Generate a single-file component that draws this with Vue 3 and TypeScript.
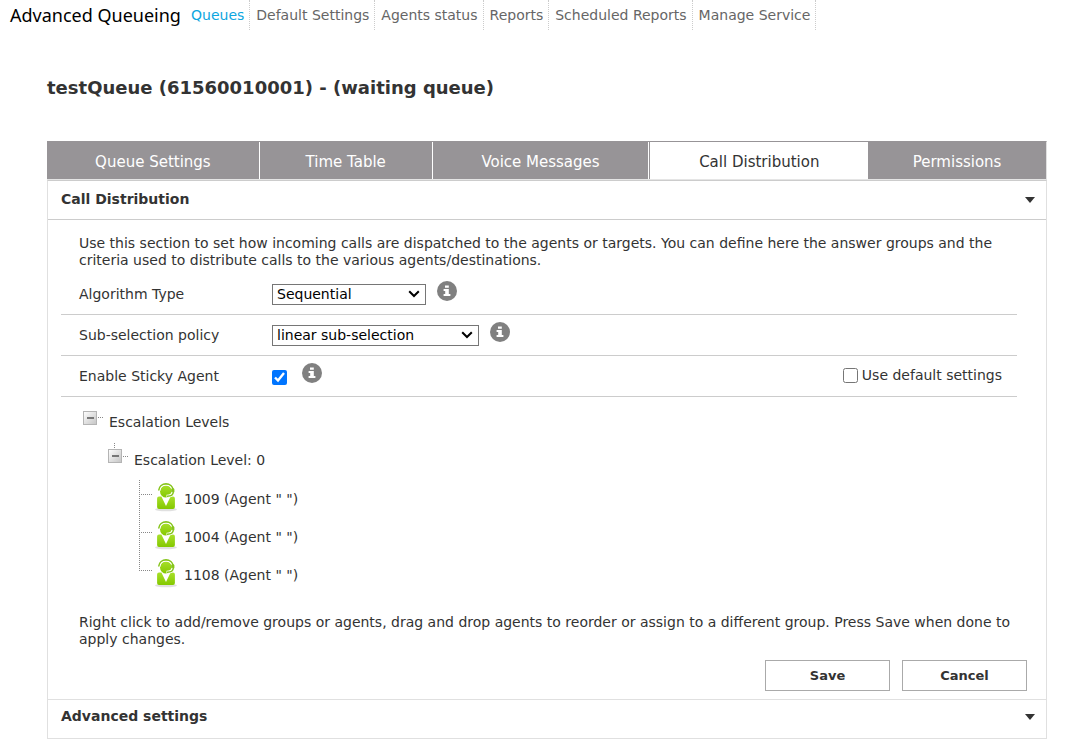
<script setup lang="ts">
import { ref } from 'vue'

interface Agent {
  ext: string
  name: string
}

const navItems: string[] = [
  'Queues',
  'Default Settings',
  'Agents status',
  'Reports',
  'Scheduled Reports',
  'Manage Service',
]
const tabs: string[] = [
  'Queue Settings',
  'Time Table',
  'Voice Messages',
  'Call Distribution',
  'Permissions',
]
const agents: Agent[] = [
  { ext: '1009', name: ' ' },
  { ext: '1004', name: ' ' },
  { ext: '1108', name: ' ' },
]

const activeNav = ref('Queues')
const activeTab = ref('Call Distribution')
const algorithm = ref('Sequential')
const policy = ref('linear sub-selection')
const sticky = ref(true)
const useDefaults = ref(false)
</script>

<template>
  <div class="page">
    <header class="topbar">
      <span class="brand">Advanced Queueing</span>
      <nav class="nav">
        <a
          v-for="item in navItems"
          :key="item"
          href="#"
          class="nav-link"
          :class="{ current: item === activeNav }"
          @click.prevent="activeNav = item"
          >{{ item }}</a
        >
      </nav>
    </header>

    <main class="main">
      <h1 class="title">testQueue (61560010001) - (waiting queue)</h1>

      <div class="tabs" role="tablist">
        <button
          v-for="tab in tabs"
          :key="tab"
          type="button"
          role="tab"
          class="tab"
          :class="{ active: tab === activeTab }"
          :aria-selected="tab === activeTab"
          @click="activeTab = tab"
        >
          {{ tab }}
        </button>
      </div>

      <div class="panel">
        <button type="button" class="section-head divided">
          <span>Call Distribution</span>
          <svg class="caret" width="10" height="6" viewBox="0 0 10 6" aria-hidden="true">
            <path d="M0 0h10L5 6z" fill="#333" />
          </svg>
        </button>

        <div class="section-body">
          <p class="text">
            Use this section to set how incoming calls are dispatched to the agents or targets. You can define here the answer groups and the criteria used to distribute calls to the various agents/destinations.
          </p>

          <div class="row">
            <label class="row-label" for="algorithm">Algorithm Type</label>
            <span class="select-box narrow">
              <select id="algorithm" v-model="algorithm">
                <option>Sequential</option>
                <option>Circular</option>
              </select>
              <svg class="chevron" width="12" height="8" viewBox="0 0 12 8" aria-hidden="true">
                <path d="M1.2 1.2L6 6l4.800-4.800" />
              </svg>
            </span>
            <svg class="info" width="20" height="20" viewBox="0 0 20 20" aria-hidden="true">
              <circle cx="10" cy="10" r="10" />
              <path d="M8 4.600h3.800v2.200H8zM6.600 8h5.200v5h1.600v2H6.600v-2h1.600V9.900H6.600z" />
            </svg>
          </div>

          <div class="row">
            <label class="row-label" for="policy">Sub-selection policy</label>
            <span class="select-box wide">
              <select id="policy" v-model="policy">
                <option>linear sub-selection</option>
                <option>random sub-selection</option>
              </select>
              <svg class="chevron" width="12" height="8" viewBox="0 0 12 8" aria-hidden="true">
                <path d="M1.2 1.2L6 6l4.800-4.800" />
              </svg>
            </span>
            <svg class="info" width="20" height="20" viewBox="0 0 20 20" aria-hidden="true">
              <circle cx="10" cy="10" r="10" />
              <path d="M8 4.600h3.800v2.200H8zM6.600 8h5.200v5h1.600v2H6.600v-2h1.600V9.900H6.600z" />
            </svg>
          </div>

          <div class="row">
            <label class="row-label" for="sticky">Enable Sticky Agent</label>
            <input id="sticky" v-model="sticky" type="checkbox" class="check" />
            <svg class="info" width="20" height="20" viewBox="0 0 20 20" aria-hidden="true">
              <circle cx="10" cy="10" r="10" />
              <path d="M8 4.600h3.800v2.200H8zM6.600 8h5.200v5h1.600v2H6.600v-2h1.600V9.900H6.600z" />
            </svg>
            <span class="defaults">
              <input id="defaults" v-model="useDefaults" type="checkbox" class="check" />
              <label for="defaults">Use default settings</label>
            </span>
          </div>

          <svg class="defs" width="0" height="0" aria-hidden="true">
            <defs>
              <linearGradient id="boxFill" x1="0" y1="0" x2="1" y2="1">
                <stop offset="0" stop-color="#fff" />
                <stop offset="1" stop-color="#c4c4c4" />
              </linearGradient>
              <linearGradient id="agentFill" x1="0" y1="0" x2="0" y2="1">
                <stop offset="0" stop-color="#a8e02a" />
                <stop offset="1" stop-color="#84c800" />
              </linearGradient>
            </defs>
          </svg>

          <ul class="tree">
            <li>
              <div class="node">
                <svg width="26" height="38" viewBox="0 0 26 38" aria-hidden="true">
                  <rect x="0.5" y="8.500" width="13" height="13" fill="url(#boxFill)" stroke="#b4b4b4" />
                  <path d="M4 15h7" stroke="#777" stroke-width="2" />
                  <path d="M15 14.500h5" class="dots" />
                </svg>
                <span>Escalation Levels</span>
              </div>
              <ul class="level">
                <li>
                  <div class="node">
                    <svg width="26" height="38" viewBox="0 0 26 38" aria-hidden="true">
                      <path d="M6.500 2v6" class="dots" />
                      <rect x="0.5" y="8.500" width="13" height="13" fill="url(#boxFill)" stroke="#b4b4b4" />
                      <path d="M4 15h7" stroke="#777" stroke-width="2" />
                      <path d="M15 15.500h5" class="dots" />
                    </svg>
                    <span>Escalation Level: 0</span>
                  </div>
                  <ul class="agents">
                    <li v-for="(agent, i) in agents" :key="agent.ext" class="node">
                      <svg width="46" height="38" viewBox="0 0 46 38" aria-hidden="true">
                        <path :d="i === agents.length - 1 ? 'M1.500 0v15' : 'M1.500 0v38'" class="dots" />
                        <path d="M3 14.500h11" class="dots" />
                        <ellipse cx="28" cy="29.500" rx="11" ry="1.800" fill="#000" opacity="0.12" />
                        <path
                          d="M21 16.500h2.400l4.600 9.500 4.600-9.500h2.400a1.900 1.900 0 0 1 1.900 1.900v8.600a1.900 1.900 0 0 1-1.900 1.900h-14a1.900 1.900 0 0 1-1.900-1.900v-8.600a1.900 1.900 0 0 1 1.900-1.900z"
                          fill="url(#agentFill)"
                        />
                        <ellipse cx="28" cy="11.300" rx="6" ry="6.300" fill="url(#agentFill)" />
                        <path d="M21.200 10.500c.8-8 12.800-8 13.600 0" fill="none" stroke="#fff" stroke-width="2.600" />
                        <path d="M20.700 10.500c.6-8.800 14-8.800 14.600 0" fill="none" stroke="#86c51c" stroke-width="1.600" />
                        <rect x="33.200" y="8" width="3.200" height="5" rx="1.500" fill="#86c51c" />
                        <path d="M35 12c-.3 3-2.800 4.200-6.500 4.200" fill="none" stroke="#fff" stroke-width="3" />
                        <path d="M35.300 12c-.2 3-2.600 4.300-6.300 4.200" fill="none" stroke="#86c51c" stroke-width="1.500" />
                      </svg>
                      <span>{{ agent.ext }} (Agent "{{ agent.name }}")</span>
                    </li>
                  </ul>
                </li>
              </ul>
            </li>
          </ul>

          <p class="text hint">
            Right click to add/remove groups or agents, drag and drop agents to reorder or assign to a different group. Press Save when done to apply changes.
          </p>

          <div class="actions">
            <button type="button" class="btn">Save</button>
            <button type="button" class="btn">Cancel</button>
          </div>
        </div>

        <button type="button" class="section-head">
          <span>Advanced settings</span>
          <svg class="caret" width="10" height="6" viewBox="0 0 10 6" aria-hidden="true">
            <path d="M0 0h10L5 6z" fill="#333" />
          </svg>
        </button>
      </div>
    </main>
  </div>
</template>

<style>
body {
  margin: 0;
  background: #fff;
}
</style>

<style scoped>
.page {
  font-family: Verdana, 'DejaVu Sans', sans-serif;
  font-size: 14px;
  line-height: 17px;
  color: #333;
}
.page button,
.page select {
  font-family: inherit;
}
.topbar {
  display: flex;
  height: 30px;
  padding-left: 10px;
}
.brand {
  min-width: 175px;
  font-family: 'Noto Sans', sans-serif;
  font-size: 18px;
  line-height: 30px;
  color: #000;
  white-space: nowrap;
}
.nav {
  display: flex;
}
.nav-link {
  padding: 0 5px 0 6px;
  border-right: 1px dotted #ccc;
  line-height: 30px;
  color: #666;
  text-decoration: none;
  white-space: nowrap;
}
.nav-link.current {
  color: #0da6e0;
}
.main {
  padding: 47px 31px 16px 47px;
}
.title {
  margin: 0;
  font-size: 18px;
  line-height: 22px;
  font-weight: bold;
  color: #333;
}
.tabs {
  display: grid;
  grid-template-columns: 213fr 173fr 217fr 219fr 178fr;
  margin-top: 42px;
  border-top: 1px solid #979497;
  border-right: 1px solid #e0e0e0;
  border-bottom: 1px solid #e5e5e5;
  background: #979497;
}
.tab {
  height: 37px;
  padding: 2px 0 0;
  border: 0;
  border-right: 1px solid #fff;
  background: #979497;
  color: #fff;
  font-size: 15px;
  line-height: 20px;
}
.tab:last-child {
  border-right: 0;
}
.tab.active {
  margin-left: 1px;
  border-right: 0;
  background: #fff;
  color: #333;
}
.panel {
  border: 1px solid #e0e0e0;
  border-top-color: #ccc;
}
.section-head {
  display: flex;
  align-items: center;
  justify-content: space-between;
  width: 100%;
  height: 38px;
  padding: 0 11px 6px 13px;
  border: 0;
  background: #fff;
  color: #333;
  font-size: 14px;
  font-weight: bold;
}
.section-head.divided {
  height: 39px;
  padding-bottom: 2px;
  border-bottom: 1px solid #ccc;
}
.caret {
  margin-top: 2px;
}
.section-body {
  padding: 15px 29px 8px 13px;
  border-bottom: 1px solid #e0e0e0;
}
.text {
  margin: 0;
  padding-left: 18px;
}
.row {
  display: flex;
  align-items: center;
  height: 40px;
  padding-left: 18px;
  border-bottom: 1px solid #ccc;
}
.text + .row {
  margin-top: 5px;
}
.row-label {
  width: 193px;
}
.select-box {
  display: grid;
  align-items: center;
}
.select-box > * {
  grid-area: 1 / 1;
}
.narrow {
  width: 154px;
}
.wide {
  width: 207px;
}
.select-box select {
  appearance: none;
  width: 100%;
  height: 21px;
  padding: 0 20px 0 4px;
  border: 1px solid #767676;
  border-radius: 0;
  background: #fff;
  color: #000;
  font-size: 14px;
}
.chevron {
  justify-self: end;
  margin-right: 6px;
  pointer-events: none;
}
.chevron path {
  fill: none;
  stroke: #000;
  stroke-width: 2;
}
.info {
  margin: 0 0 6px 11px;
}
.info circle {
  fill: #808080;
}
.info path {
  fill: #fff;
}
.check {
  width: 15px;
  height: 15px;
  margin: 2px 0 0;
}
.check + .info {
  margin-left: 15px;
}
.defaults {
  display: flex;
  align-items: center;
  gap: 4px;
  margin-left: auto;
  margin-right: 15px;
  margin-bottom: 2px;
}
.defaults .check {
  margin: 0;
}
.defs {
  display: block;
}
.tree,
.tree ul {
  margin: 0;
  padding: 0;
  list-style: none;
}
.tree {
  padding: 6px 0 0 22px;
}
.tree .level {
  padding-left: 25px;
}
.tree .agents {
  padding: 1px 0 0 30px;
}
.node {
  display: flex;
  align-items: center;
  height: 38px;
}
.dots {
  fill: none;
  stroke: #888;
  stroke-width: 1;
  stroke-dasharray: 1 1;
}
.hint {
  padding-top: 20px;
}
.actions {
  display: flex;
  justify-content: flex-end;
  gap: 12px;
  margin: 12px -10px 0 0;
}
.btn {
  width: 125px;
  height: 31px;
  padding: 0;
  border: 1px solid #aaa;
  background: #fff;
  color: #333;
  font-size: 13px;
  font-weight: bold;
}
</style>
